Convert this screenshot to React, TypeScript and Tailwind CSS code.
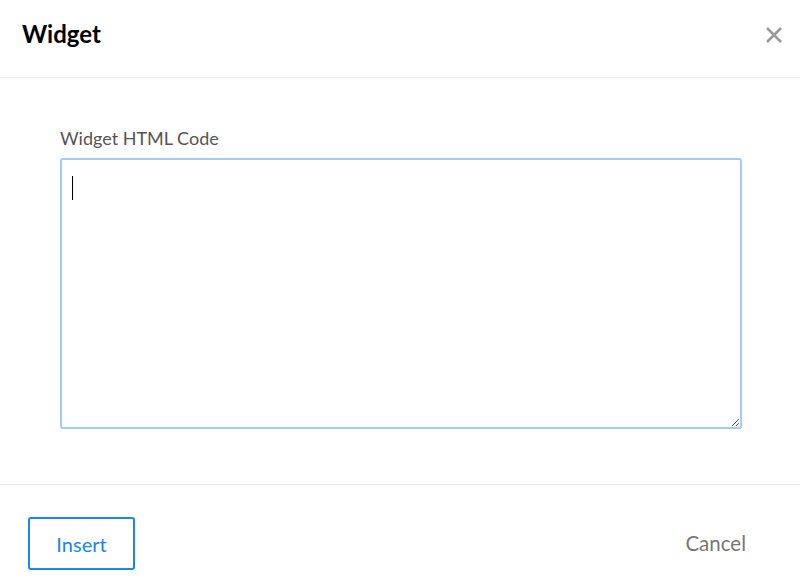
export default function App() {
  return (
    <div className="flex h-[583px] w-[800px] flex-col bg-white font-['Lato',sans-serif]">
      <header className="flex h-[78px] shrink-0 items-start justify-between border-b border-[#ececec] pt-[20px] pr-[17px] pl-[22px]">
        <h1 className="text-[24px] leading-[28px] font-bold text-black">Widget</h1>
        <button className="mt-[6px] text-[#9a9a9a]" aria-label="Close">
          <svg width="18" height="18" viewBox="0 0 18 18" fill="none" stroke="currentColor" strokeWidth="2.6">
            <path d="M2 2L16 16M16 2L2 16" />
          </svg>
        </button>
      </header>

      <main className="flex h-[407px] shrink-0 flex-col border-b border-[#ececec] px-[60px] pt-[50px]">
        <label className="mb-[10px] text-[18px] leading-[20px] text-[#555]">Widget HTML Code</label>
        <div className="relative">
          <textarea className="block h-[271px] w-[682px] resize-y rounded-[3px] border-2 border-[#a3cbfa] px-[10px] py-[8px] outline-none" />
          <span className="pointer-events-none absolute top-[18px] left-[12px] h-[24px] w-px bg-black" />
        </div>
      </main>

      <footer className="flex flex-1 items-start justify-between pt-[32px] pr-[54px] pl-[28px]">
        <button className="h-[53px] w-[107px] rounded-[3px] border-2 border-[#1a84fb] text-[20px] text-[#1a84fb]">
          Insert
        </button>
        <button className="mt-[14px] text-[20.5px] leading-[24px] text-[#777]">Cancel</button>
      </footer>
    </div>
  )
}
